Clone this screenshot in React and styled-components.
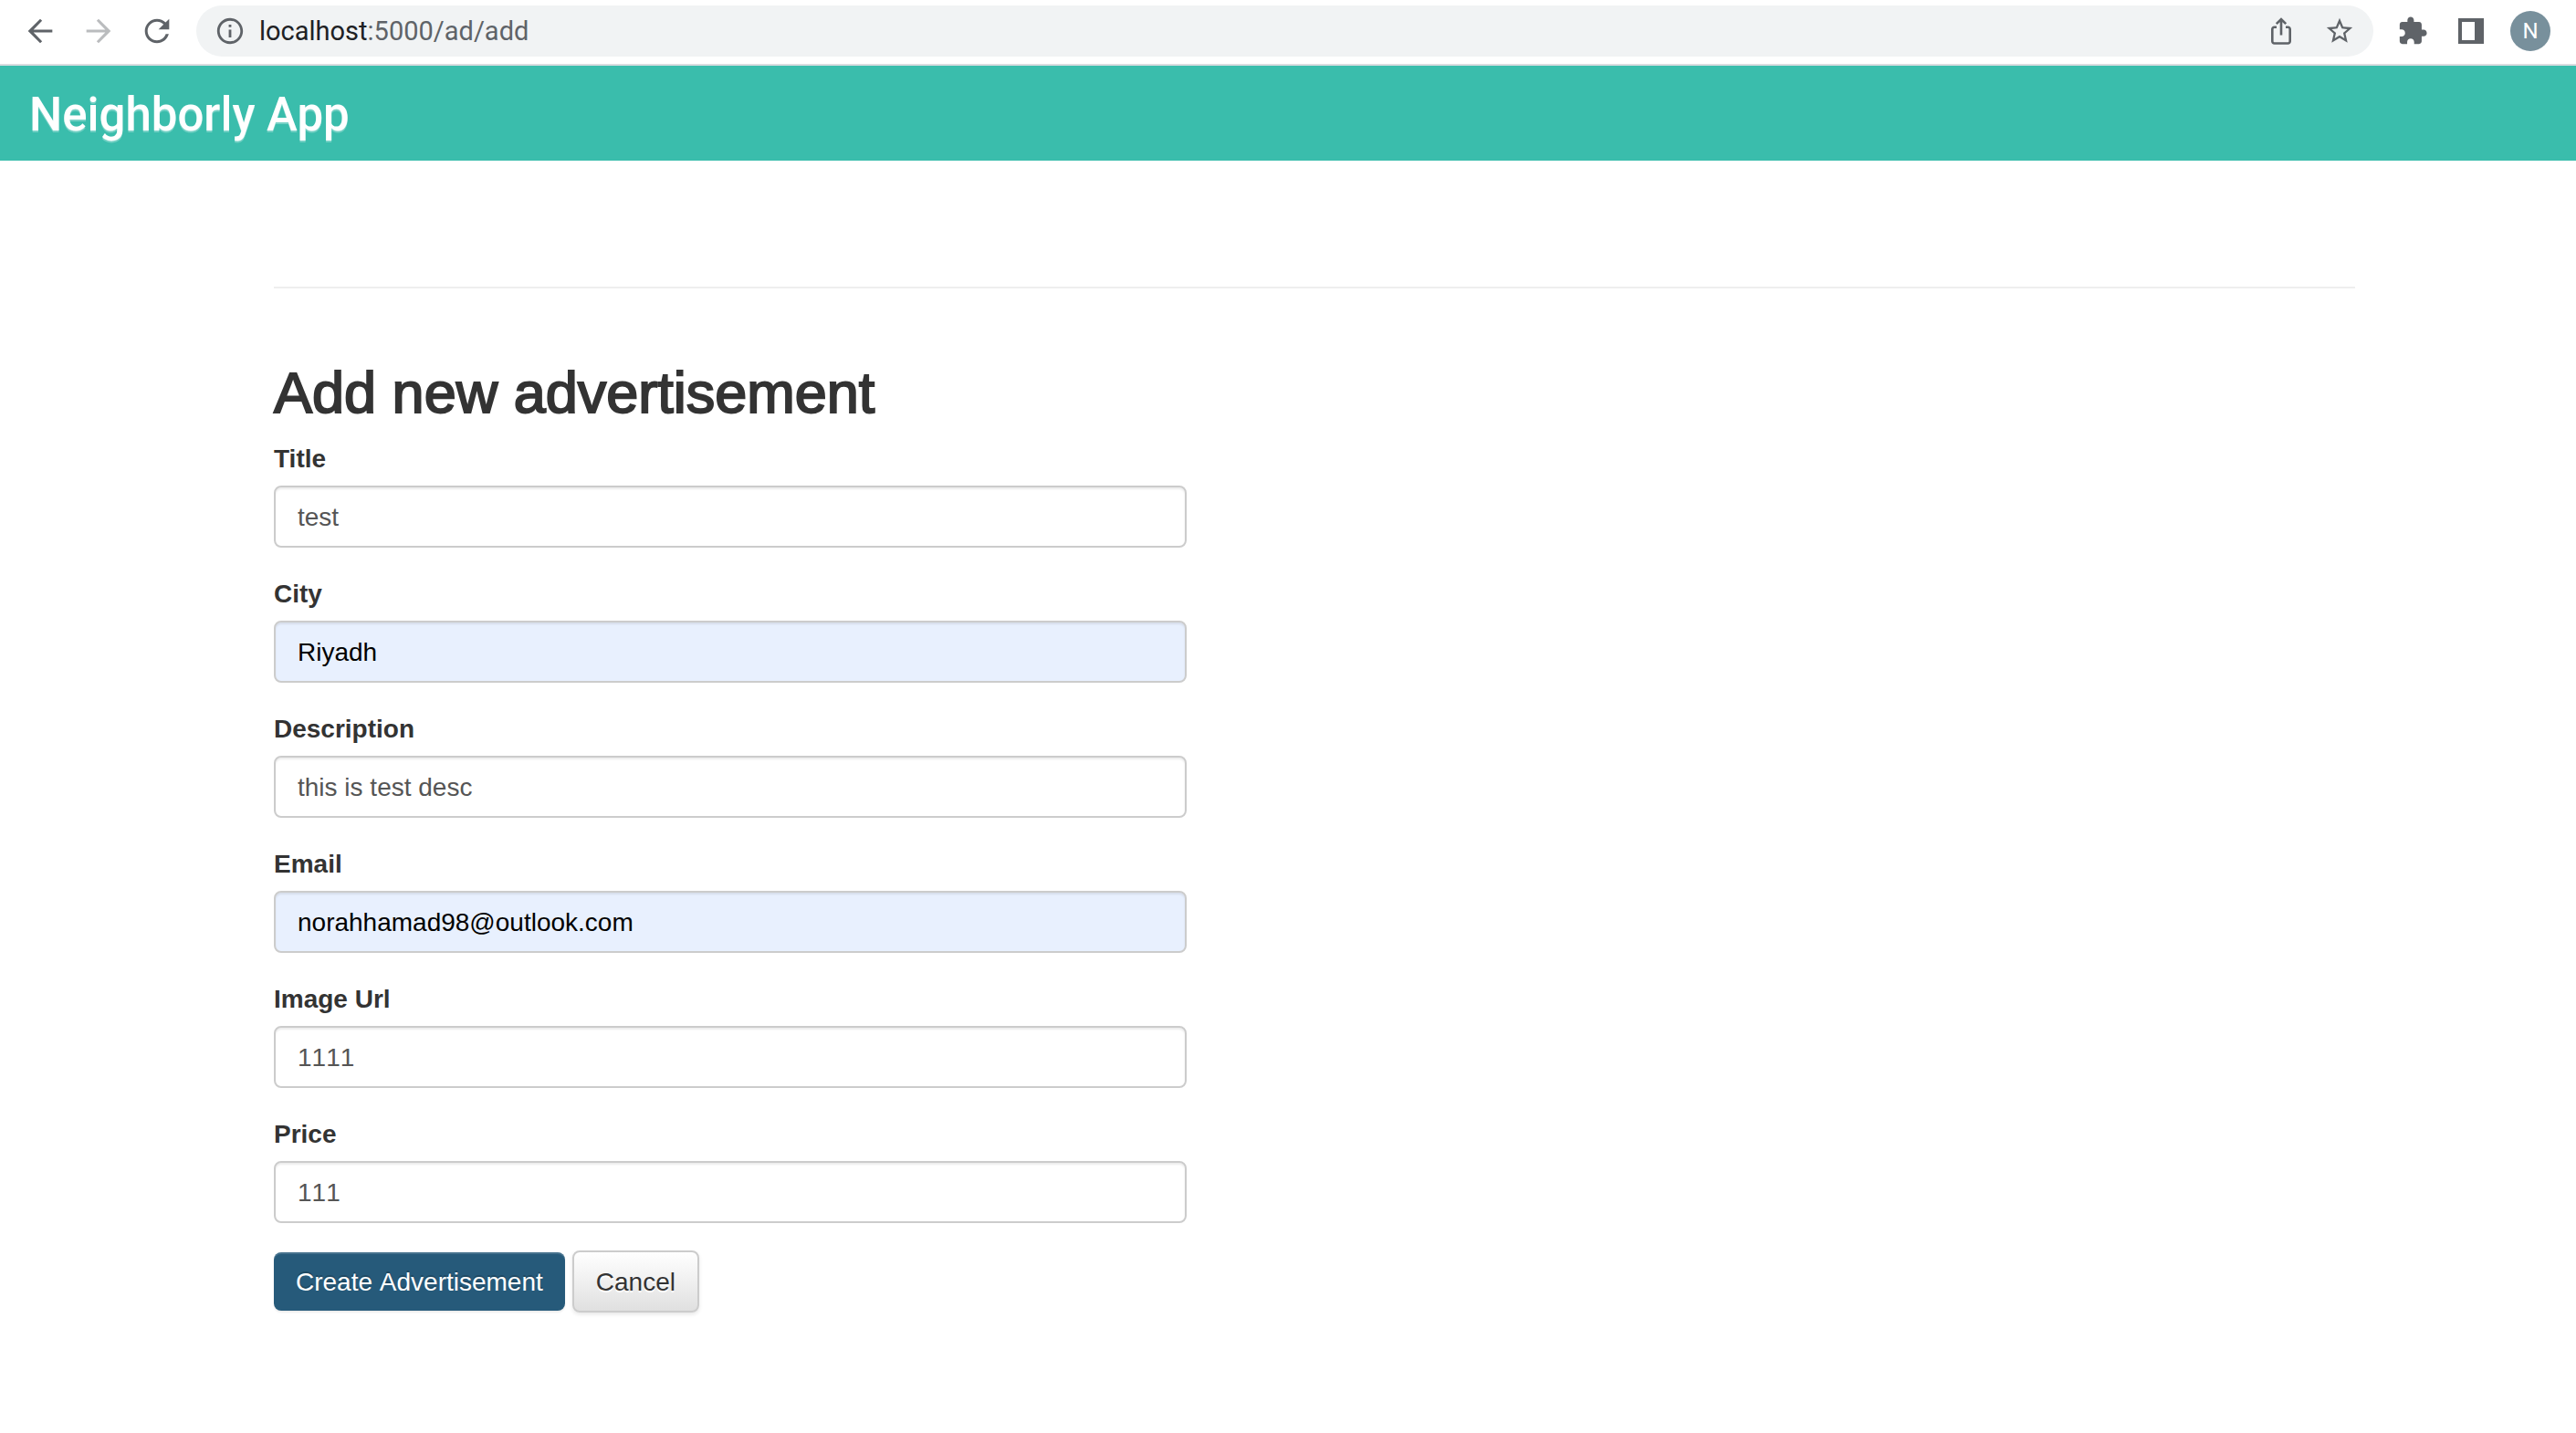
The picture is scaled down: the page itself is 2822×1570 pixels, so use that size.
import React from "react";
import styled, { createGlobalStyle } from "styled-components";

const GlobalStyle = createGlobalStyle`
  *, *::before, *::after { box-sizing: border-box; }
  body {
    margin: 0;
    background: #fff;
    color: #333;
    font-family: "Liberation Sans", Arial, sans-serif;
    font-size: 28px;
    line-height: 40px;
  }
`;

const Toolbar = styled.div`
  display: flex;
  align-items: center;
  gap: 22px;
  height: 72px;
  padding: 0 28px 2px 23px;
  background: #fff;
  border-bottom: 2px solid #dadce0;
`;

const IconButton = styled.button`
  display: flex;
  align-items: center;
  justify-content: center;
  flex: none;
  width: ${(p) => (p.$compact ? 34 : 42)}px;
  height: 42px;
  padding: 0;
  border: 0;
  background: none;
  color: ${(p) => (p.disabled ? "#babcbe" : "#5f6368")};
`;

const AddressBar = styled.div`
  display: flex;
  align-items: center;
  flex: 1;
  min-width: 0;
  gap: 15px;
  height: 56px;
  padding: 0 20px;
  border-radius: 28px;
  background: #f1f3f4;
`;

const Address = styled.a`
  flex: 1;
  color: #5f6368;
  font-family: Roboto, sans-serif;
  font-size: 29px;
  line-height: 32px;
  text-decoration: none;
`;

const Host = styled.span`
  color: #202124;
`;

const AddressActions = styled.div`
  display: flex;
  gap: 30px;
`;

const Avatar = styled.button`
  flex: none;
  width: 44px;
  height: 44px;
  padding: 0;
  border: 0;
  border-radius: 50%;
  background: #78909c;
  color: #fff;
  font-family: Roboto, sans-serif;
  font-size: 24px;
  line-height: 44px;
`;

const Navbar = styled.header`
  display: flex;
  align-items: center;
  height: 104px;
  padding: 4px 32px 0;
  background: #3abdac;
`;

const Brand = styled.a`
  color: #fff;
  font-family: Roboto, sans-serif;
  font-size: 51px;
  font-weight: 500;
  line-height: 64px;
  text-decoration: none;
  text-shadow: 0 2px 0 rgba(255, 255, 255, 0.3);
`;

const Main = styled.main`
  padding: 138px 242px 40px 300px;
`;

const Divider = styled.hr`
  height: 2px;
  margin: 0 0 74px;
  border: 0;
  background: #eee;
`;

const Heading = styled.h1`
  margin: 0 0 12px;
  font-size: 63px;
  font-weight: 400;
  line-height: 80px;
  -webkit-text-stroke: 2px #333;
`;

const Form = styled.form`
  display: flex;
  flex-direction: column;
  gap: 30px;
  max-width: 1000px;
`;

const Field = styled.div`
  display: flex;
  flex-direction: column;
  gap: 8px;
`;

const Label = styled.label`
  font-weight: 700;
  line-height: 42px;
`;

const Input = styled.input`
  width: 100%;
  height: 68px;
  padding: 2px 24px 0;
  border: 2px solid #ccc;
  border-radius: 8px;
  background: ${(p) => (p.$suggested ? "#e8f0fe" : "#fff")};
  box-shadow: inset 0 2px 2px rgba(0, 0, 0, 0.075);
  color: ${(p) => (p.$suggested ? "#000" : "#555")};
  font: inherit;
  font-kerning: none;
`;

const Actions = styled.div`
  display: flex;
  align-items: center;
  gap: 8px;
`;

const Button = styled.button`
  height: 68px;
  padding: 2px 24px 0;
  border: 2px solid #ccc;
  border-radius: 8px;
  background: linear-gradient(#fff, #e0e0e0);
  box-shadow: 0 2px 4px rgba(0, 0, 0, 0.1);
  color: #333;
  font: inherit;
  font-kerning: none;
  text-shadow: 0 2px 0 #fff;
`;

const PrimaryButton = styled(Button)`
  height: 64px;
  border: 0;
  background: #265a7a;
  box-shadow: inset 0 2px 0 rgba(255, 255, 255, 0.15), 0 2px 2px rgba(0, 0, 0, 0.075);
  color: #fff;
  text-shadow: 0 -2px 0 rgba(0, 0, 0, 0.2);
`;

const Glyph = ({ size, d }) => (
  <svg width={size} height={size} viewBox="0 0 24 24" fill="currentColor" aria-hidden="true">
    <path d={d} />
  </svg>
);

const BACK = "M20 11.1H7.6l5.7-5.8L12 4l-8 8 8 8 1.3-1.3-5.7-5.8H20z";
const FORWARD = "M4 12.9h12.4l-5.7 5.8L12 20l8-8-8-8-1.3 1.3 5.7 5.8H4z";
const RELOAD =
  "M17.65 6.35C16.2 4.9 14.21 4 12 4c-4.42 0-7.99 3.58-7.99 8s3.57 8 7.99 8c3.73 0 6.84-2.55 7.73-6h-1.98c-.82 2.4-3.1 4.2-5.75 4.2-3.4 0-6.2-2.8-6.2-6.2s2.8-6.2 6.2-6.2c1.7 0 3.2.7 4.3 1.8L13 11h7V4z";
const INFO =
  "M11 7h2v2h-2zm0 4h2v6h-2zm1-9C6.48 2 2 6.48 2 12s4.48 10 10 10 10-4.48 10-10S17.52 2 12 2zm0 18c-4.41 0-8-3.59-8-8s3.59-8 8-8 8 3.59 8 8-3.59 8-8 8z";
const STAR =
  "M22 9.24l-7.19-.62L12 2 9.19 8.63 2 9.24l5.46 4.73L5.82 21 12 17.27 18.18 21l-1.63-7.03zM12 15.4l-3.76 2.27 1-4.28-3.32-2.88 4.38-.38L12 6.1l1.71 4.04 4.38.38-3.32 2.88 1 4.28z";
const PUZZLE =
  "M20.5 11H19V7c0-1.1-.9-2-2-2h-4V3.5C13 2.12 11.88 1 10.5 1S8 2.12 8 3.5V5H4c-1.1 0-1.99.9-1.99 2v3.8H3.5c1.49 0 2.7 1.21 2.7 2.7s-1.21 2.7-2.7 2.7H2V20c0 1.1.9 2 2 2h3.8v-1.5c0-1.49 1.21-2.7 2.7-2.7 1.49 0 2.7 1.21 2.7 2.7V22H17c1.1 0 2-.9 2-2v-4h1.5c1.38 0 2.5-1.12 2.5-2.5S21.88 11 20.5 11z";

const ShareIcon = () => (
  <svg width="34" height="34" viewBox="0 0 34 34" fill="none" stroke="currentColor" strokeWidth="2.6" aria-hidden="true">
    <path d="M12 12.8H9.5A2.2 2.2 0 0 0 7.3 15v13.3a2.2 2.2 0 0 0 2.2 2.2h15a2.2 2.2 0 0 0 2.2-2.2V15a2.2 2.2 0 0 0-2.2-2.2H22" />
    <path d="M17 21.5V5M11.8 9.2 17 4l5.2 5.2" />
  </svg>
);

const SidePanelIcon = () => (
  <svg width="28" height="28" viewBox="0 0 28 28" fill="currentColor" aria-hidden="true">
    <path fillRule="evenodd" d="M0 0h28v28H0zM4 4v20h14V4z" />
  </svg>
);

const fields = [
  { id: "title", label: "Title", value: "test" },
  { id: "city", label: "City", value: "Riyadh", suggested: true },
  { id: "description", label: "Description", value: "this is test desc" },
  { id: "email", label: "Email", value: "norahhamad98@outlook.com", suggested: true },
  { id: "imgUrl", label: "Image Url", value: "1111" },
  { id: "price", label: "Price", value: "111" },
];

export default function App() {
  return (
    <>
      <GlobalStyle />
      <Toolbar>
        <IconButton aria-label="Back"><Glyph size={40} d={BACK} /></IconButton>
        <IconButton aria-label="Forward" disabled><Glyph size={40} d={FORWARD} /></IconButton>
        <IconButton aria-label="Reload"><Glyph size={40} d={RELOAD} /></IconButton>
        <AddressBar>
          <IconButton $compact aria-label="Site information"><Glyph size={34} d={INFO} /></IconButton>
          <Address href="#"><Host>localhost</Host>:5000/ad/add</Address>
          <AddressActions>
            <IconButton $compact aria-label="Share"><ShareIcon /></IconButton>
            <IconButton $compact aria-label="Bookmark"><Glyph size={34} d={STAR} /></IconButton>
          </AddressActions>
        </AddressBar>
        <IconButton aria-label="Extensions"><Glyph size={34} d={PUZZLE} /></IconButton>
        <IconButton aria-label="Side panel"><SidePanelIcon /></IconButton>
        <Avatar aria-label="Profile">N</Avatar>
      </Toolbar>
      <Navbar>
        <Brand href="#">Neighborly App</Brand>
      </Navbar>
      <Main>
        <Divider />
        <Heading>Add new advertisement</Heading>
        <Form onSubmit={(e) => e.preventDefault()}>
          {fields.map((f) => (
            <Field key={f.id}>
              <Label htmlFor={f.id}>{f.label}</Label>
              <Input id={f.id} name={f.id} type="text" defaultValue={f.value} $suggested={f.suggested} />
            </Field>
          ))}
          <Actions>
            <PrimaryButton type="submit">Create Advertisement</PrimaryButton>
            <Button type="button">Cancel</Button>
          </Actions>
        </Form>
      </Main>
    </>
  );
}
